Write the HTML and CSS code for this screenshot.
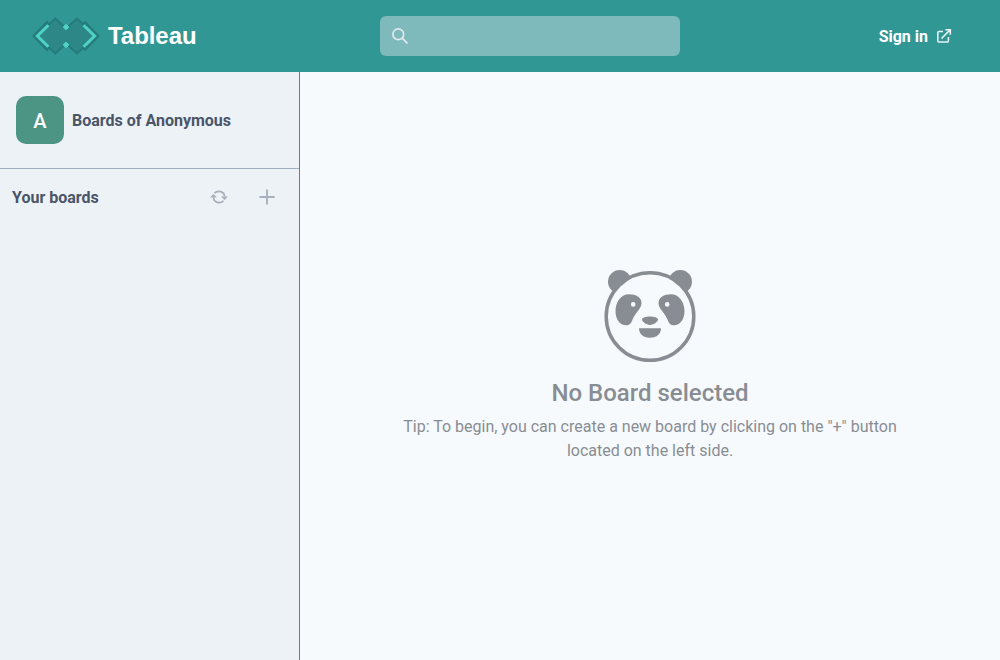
FILE: index.html
```html
<!DOCTYPE html>
<html lang="en">
<head>
<meta charset="utf-8">
<title>Tableau</title>
<link rel="stylesheet" href="styles.css">
</head>
<body>
<header class="header">
  <a class="brand">
    <svg class="logo" width="68" height="40" viewBox="0 0 68 40">
      <path d="M1.4 20 15 6 17 8.200 23.500 2.600 34 12.500 45 2.600 51 8.200 53.200 6 66.600 20 53.200 34 51 31.800 45 37.400 34 27.500 23.500 37.400 17 31.800 15 34Z" fill="#2c8786" stroke="#237b7a" stroke-width="1.9"/>
      <path d="M16.400 9.200 5.400 20 16.400 30.800M51.600 9.200 62.600 20 51.600 30.800" fill="none" stroke="#4fd1c5" stroke-width="3"/>
      <path d="M34 8.300 36.900 11 34 13.900 31.100 11ZM34 26 36.900 28.900 34 31.800 31.100 28.900Z" fill="#4fd1c5" stroke="#4fd1c5" stroke-linejoin="round"/>
    </svg>
    <span class="brand-name">Tableau</span>
  </a>
  <div class="search">
    <svg width="16" height="16" viewBox="0 0 16 16" fill="none" stroke="#e2e8f0" stroke-width="1.7"><circle cx="6.3" cy="6.3" r="5.400"/><path d="m10.200 10.200 5.300 5.300"/></svg>
  </div>
  <a class="signin"><span class="label">Sign in</span>
    <svg width="16" height="16" viewBox="0 0 16 16" fill="none" stroke="#e6f1f3" stroke-width="1.600"><path d="M7 3.500H3A1.200 1.200 0 0 0 1.800 4.700v8.100A1.200 1.200 0 0 0 3 14h8.200a1.200 1.200 0 0 0 1.200-1.200V9M5.500 10.500l8.500-8.600M9.300 1.700h5v5"/></svg>
  </a>
</header>
<div class="content">
  <aside class="sidebar">
    <div class="profile">
      <div class="avatar"><span class="label">A</span></div>
      <span class="label">Boards of Anonymous</span>
    </div>
    <div class="boards">
      <span class="boards-title label">Your boards</span>
      <svg class="action" width="18" height="18" viewBox="0 0 18 18"><path d="M4.500 5.200A5.700 5.200 0 0 1 14.500 8.500M13.500 12.800A5.700 5.200 0 0 1 3.500 9.500" fill="none" stroke="#a9b0bd" stroke-width="1.800"/><path d="M11 8.600h7l-3.500 3.500ZM0 9.400h7L3.500 5.900Z" fill="#a9b0bd"/></svg>
      <svg class="action" width="16" height="16" viewBox="0 0 16 16" stroke="#a9b0bd" stroke-width="1.900"><path d="M8 .4v15.200M.4 8h15.200"/></svg>
    </div>
  </aside>
  <main class="main">
    <svg class="panda" width="96" height="96" viewBox="0 0 96 96" fill="#888d94">
      <circle cx="17.700" cy="13.700" r="11.700"/>
      <circle cx="78.300" cy="13.700" r="11.700"/>
      <circle cx="48" cy="48.500" r="43.800" fill="#f7fafc" stroke="#888d94" stroke-width="3.500"/>
      <path fill-rule="evenodd" d="M27 26.200c7 0 12.500 3.200 12.500 8.700 0 6-5.700 9-8.500 15.500-1.500 3.600-2.500 6.900-7 6.900-6 0-10.500-6-10.500-14 0-9.600 5.500-17.100 13.500-17.100Zm4.200 7.900a2.300 2.300 0 1 0 0 4.600 2.300 2.300 0 0 0 0-4.600ZM69 26.200c-7 0-12.500 3.200-12.500 8.700 0 6 5.700 9 8.500 15.500 1.500 3.600 2.500 6.900 7 6.900 6 0 10.500-6 10.500-14 0-9.600-5.500-17.100-13.500-17.100Zm-3.800 7.900a2.300 2.300 0 1 1 0 4.600 2.300 2.300 0 0 1 0-4.600Z"/>
      <path d="M40 51.600c0-4 16-4 16 0 0 2-4 5.300-8 5.300s-8-3.300-8-5.300ZM37 60.300h22c0 5.500-4 9.500-11 9.500s-11-4-11-9.500Z"/>
    </svg>
    <h1 class="title">No Board selected</h1>
    <p class="tip">Tip: To begin, you can create a new board by clicking on the "+" button located on the left side.</p>
  </main>
</div>
</body>
</html>
```
FILE: styles.css
```css
* { box-sizing: border-box; }
body {
  margin: 0;
  height: 100vh;
  display: flex;
  flex-direction: column;
  font: 16px/24px Roboto, sans-serif;
  color: #4a5568;
}
svg { display: block; flex: none; }
.header {
  height: 72px;
  flex: none;
  display: grid;
  grid-template-columns: 348px 300px 1fr;
  align-items: center;
  padding: 0 48px 0 32px;
  background: #319795;
  color: #fff;
}
.brand { display: flex; align-items: center; gap: 8px; }
.brand-name { font: bold 24px/36px "Liberation Sans", Arial, sans-serif; letter-spacing: -0.05px; }
.search {
  height: 40px;
  display: flex;
  align-items: center;
  padding-left: 12px;
  border-radius: 6px;
  background: #7ebabc;
}
.label { padding-top: 2px; }
.signin { display: flex; align-items: center; justify-content: flex-end; gap: 8px; font-weight: 700; }
.content { flex: 1; display: flex; min-height: 0; }
.sidebar { width: 300px; flex: none; background: #edf2f7; border-right: 1px solid #319795; }
.profile {
  height: 97px;
  display: flex;
  align-items: center;
  gap: 8px;
  padding: 0 16px;
  border-bottom: 1px solid #a0aec0;
  font-weight: 700;
}
.avatar {
  width: 48px;
  height: 48px;
  display: grid;
  place-items: center;
  border-radius: 10px;
  background: #4c9585;
  color: #fff;
  font-size: 20px;
  font-weight: 500;
}
.avatar .label { display: block; }
.boards { display: flex; align-items: center; height: 56px; padding: 0 24px 0 12px; }
.boards-title { flex: 1; font-weight: 700; }
.action + .action { margin-left: 31px; }
.main {
  flex: 1;
  display: flex;
  flex-direction: column;
  align-items: center;
  padding: 196px 96px 0;
  background: #f7fafc;
  color: #888d94;
  text-align: center;
}
.title { margin: 11px 0 4px; font-size: 24px; line-height: 36px; font-weight: 500; }
.tip { margin: 0; max-width: 508px; }
```
